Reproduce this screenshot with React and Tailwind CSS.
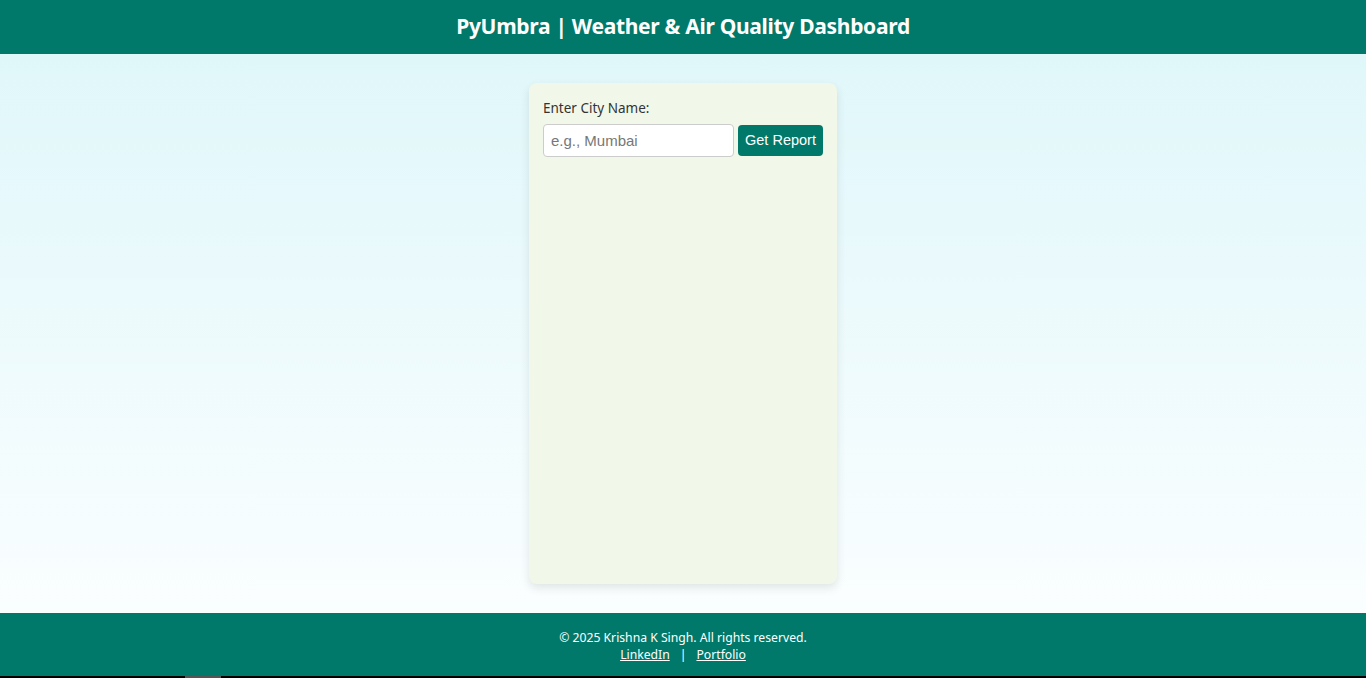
export default function App() {
  const font = { fontFamily: '"Segoe UI", "Noto Sans", "Open Sans", sans-serif' };
  return (
    <div className="flex flex-col min-h-[678px] bg-black" style={font}>
      <header className="h-[54px] bg-[#00796b] flex items-center justify-center">
        <h1 className="text-white font-bold text-[21px] tracking-[-0.3px]">PyUmbra | Weather &amp; Air Quality Dashboard</h1>
      </header>
      <main className="flex justify-center pt-[29px] pb-[29px] bg-gradient-to-b from-[#e0f7fa] to-[#fafeff]">
        <div className="w-[308px] h-[501px] bg-[#f1f8e9] rounded-[8px] shadow-[0_4px_10px_rgba(0,0,0,0.1)] px-[14px] pt-[16px]">
          <label className="block text-[13.5px] text-[#333] leading-[18px]">Enter City Name:</label>
          <div className="flex gap-[4px] mt-[7px]">
            <input
              placeholder="e.g., Mumbai"
              className="w-[191px] h-[33px] border border-[#ccc] rounded-[4px] bg-white px-[7px] text-[15px] placeholder-[#777] outline-none"
              style={{ fontFamily: '"Liberation Sans", Arial, sans-serif' }}
            />
            <button
              className="w-[85px] h-[31px] mt-[1px] bg-[#00796b] text-white rounded-[4px] text-[14.5px]"
              style={{ fontFamily: '"Liberation Sans", Arial, sans-serif' }}
            >
              Get Report
            </button>
          </div>
        </div>
      </main>
      <footer className="h-[63px] bg-[#00796b] text-white text-[12.2px] flex flex-col items-center justify-center leading-[17px] pt-[2px]">
        <div>© 2025 Krishna K Singh. All rights reserved.</div>
        <div className="flex gap-[10px]">
          <a className="underline">LinkedIn</a>
          <span>|</span>
          <a className="underline">Portfolio</a>
        </div>
      </footer>
      <div className="h-[2px] bg-black relative">
        <div className="absolute left-[185px] w-[36px] h-[2px] bg-[#555]"></div>
      </div>
    </div>
  );
}
